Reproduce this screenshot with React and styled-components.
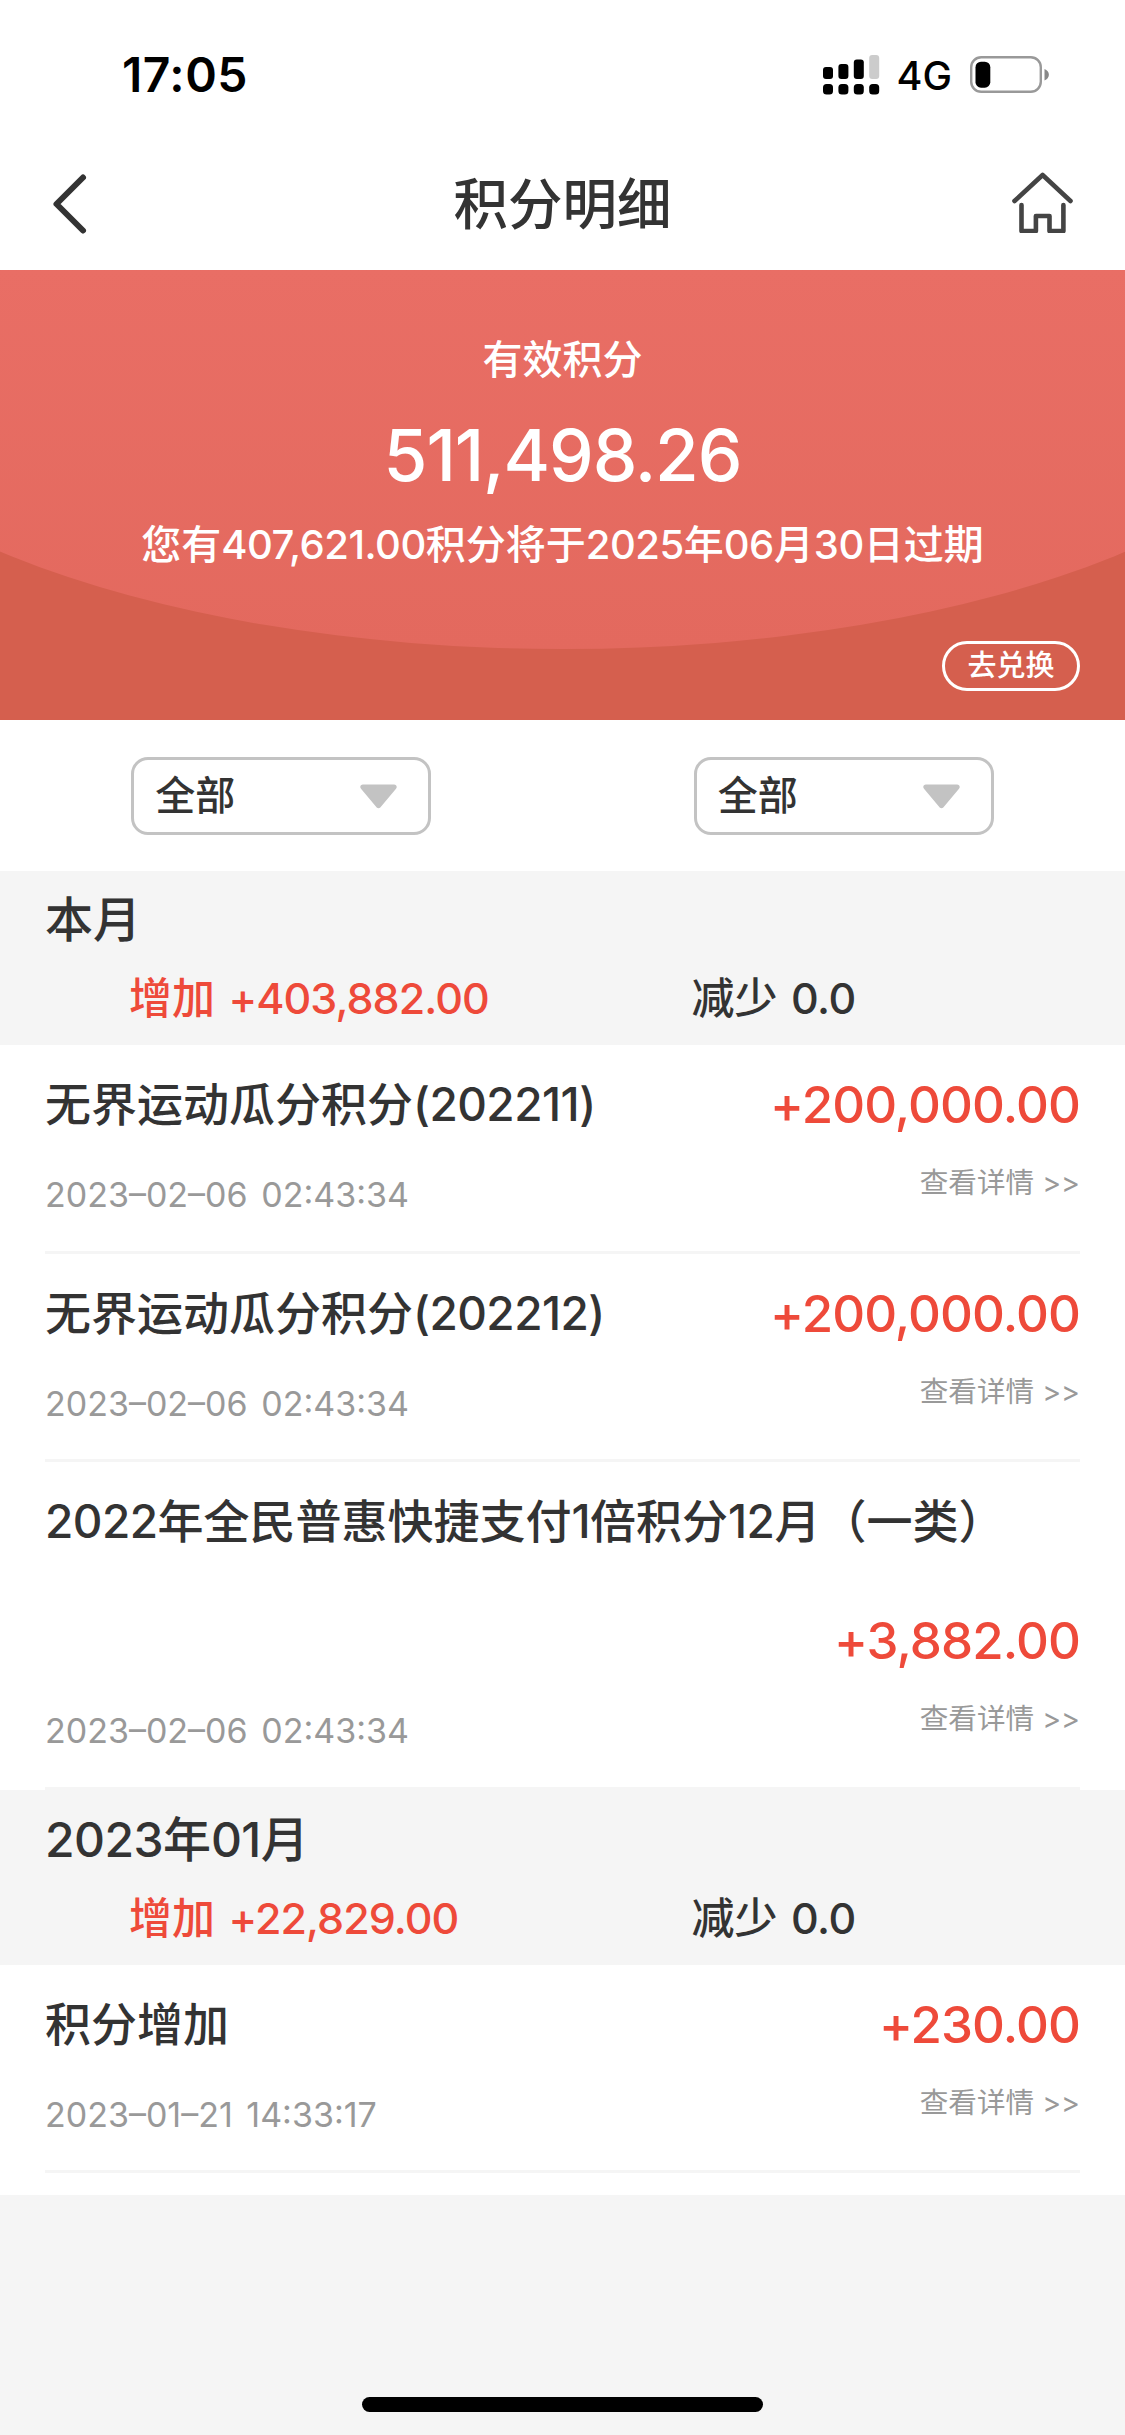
import React from "react";
import styled, { createGlobalStyle } from "styled-components";

const GlobalStyle = createGlobalStyle`
  * {
    box-sizing: border-box;
  }
  body {
    margin: 0;
    background: #f5f5f5;
    color: #333;
    font-family: Inter, "Noto Sans CJK SC", sans-serif;
    font-weight: 500;
  }
`;

const Screen = styled.div`
  width: 1125px;
  height: 2435px;
  display: flex;
  flex-direction: column;
  overflow: hidden;
`;

const StatusBar = styled.div`
  height: 135px;
  padding: 14px 75px 0 122px;
  background: #fff;
  color: #000;
  display: flex;
  align-items: flex-start;
  justify-content: space-between;
  .status__time {
    font-size: 48px;
    font-weight: 600;
    line-height: 121px;
    letter-spacing: 0.5px;
  }
  .status__icons {
    display: flex;
    align-items: center;
    height: 121px;
  }
  .status__network {
    margin: 3px 18px 0 17px;
    font-size: 39.5px;
    line-height: 48px;
  }
`;

const NavBar = styled.div`
  height: 135px;
  padding: 0 52px;
  background: #fff;
  display: grid;
  grid-template-columns: 1fr auto 1fr;
  align-items: center;
  h1 {
    margin: 2px 0 0;
    font-size: 54.5px;
    font-weight: 500;
    line-height: 80px;
  }
  svg:first-child {
    margin-top: 3px;
  }
  svg:last-child {
    justify-self: end;
    margin: 0 0 1px;
  }
`;

const Banner = styled.div`
  position: relative;
  height: 450px;
  padding: 60px 45px 0;
  background: #d55f4e;
  color: #fff;
  display: flex;
  flex-direction: column;
  align-items: center;
  overflow: hidden;
  &::before {
    content: "";
    position: absolute;
    left: -217px;
    bottom: 71px;
    width: 1560px;
    height: 634px;
    border-radius: 50%;
    background: linear-gradient(#e96e65 40%, #e3695e);
  }
  > * {
    position: relative;
  }
  .banner__label {
    font-size: 40px;
    line-height: 60px;
  }
  .banner__balance {
    font-size: 71px;
    line-height: 130px;
    letter-spacing: -1.1px;
  }
  .banner__notice {
    margin-top: 1px;
    font-size: 40px;
    line-height: 48px;
    white-space: nowrap;
  }
`;

const ExchangeButton = styled.button`
  align-self: flex-end;
  margin-top: 72px;
  width: 138px;
  height: 50px;
  padding: 0;
  border: 3px solid #fff;
  border-radius: 25px;
  background: transparent;
  color: #fff;
  font: inherit;
  font-size: 29px;
  line-height: 42px;
`;

const Filters = styled.div`
  height: 150.5px;
  padding-top: 37px;
  background: #fff;
  display: grid;
  grid-template-columns: 1fr 1fr;
  justify-items: center;
  flex-shrink: 0;
`;

const Select = styled.div`
  width: 300px;
  height: 78px;
  padding: 0 31px 0 21px;
  border: 3px solid #c3c3c3;
  border-radius: 17px;
  display: flex;
  align-items: center;
  justify-content: space-between;
  font-size: 40px;
  line-height: 66px;
`;

const MonthHeader = styled.div`
  height: 174.5px;
  padding: 19.5px 45px 0;
  flex-shrink: 0;
  h2 {
    margin: 0;
    font-size: 48px;
    font-weight: 500;
    line-height: 60px;
  }
`;

const Totals = styled.div`
  margin: 18px -45px 0;
  display: grid;
  grid-template-columns: 1fr 1fr;
`;

const Total = styled.div`
  padding-left: 129px;
  color: ${({ $increase }) => ($increase ? "#ee4a3a" : "#333")};
  font-size: 43px;
  line-height: 60px;
  word-spacing: 2px;
`;

const List = styled.div`
  padding: 0 45px ${({ $last }) => ($last ? "21.5px" : "0")};
  background: #fff;
`;

const Row = styled.div`
  display: grid;
  grid-template-columns: 1fr auto;
  grid-template-areas: ${({ $long }) =>
    $long
      ? '"title title" ". amount" "date detail"'
      : '"title amount" "date detail"'};
  border-bottom: 3px solid #f5f5f5;
  .row__title {
    grid-area: title;
    height: 118.3px;
    font-size: 46px;
    line-height: 118px;
    white-space: nowrap;
  }
  .row__amount {
    grid-area: amount;
    height: 118.3px;
    text-align: right;
    color: #ee4a3a;
    font-size: 51px;
    line-height: 119px;
    letter-spacing: -0.9px;
  }
  .row__date {
    grid-area: date;
    height: ${({ $long }) => ($long ? "88.3px" : "87.4px")};
    color: #999;
    font-size: 34px;
    font-weight: 400;
    line-height: 63px;
    word-spacing: 4px;
  }
  .row__detail {
    grid-area: detail;
    text-align: right;
    color: #999;
    font-size: 28.6px;
    font-weight: 400;
    line-height: 40px;
  }
`;

const HomeIndicator = styled.div`
  width: 401px;
  height: 15px;
  margin: auto auto 23px;
  border-radius: 8px;
  background: #000;
`;

const Num = styled.span`
  letter-spacing: ${({ $spacing }) => $spacing}em;
`;

const months = [
  {
    id: 1,
    label: "本月",
    increase: "+403,882.00",
    decrease: "0.0",
    items: [
      {
        id: 11,
        title: "无界运动瓜分积分(202211)",
        amount: "+200,000.00",
        date: "2023–02–06 02:43:34",
      },
      {
        id: 12,
        title: "无界运动瓜分积分(202212)",
        amount: "+200,000.00",
        date: "2023–02–06 02:43:34",
      },
      {
        id: 13,
        title: "2022年全民普惠快捷支付1倍积分12月（一类）",
        amount: "+3,882.00",
        date: "2023–02–06 02:43:34",
        long: true,
      },
    ],
  },
  {
    id: 2,
    label: "2023年01月",
    increase: "+22,829.00",
    decrease: "0.0",
    items: [
      {
        id: 21,
        title: "积分增加",
        amount: "+230.00",
        date: "2023–01–21 14:33:17",
      },
    ],
  },
];

const bars = [
  { x: 0, y: 12 },
  { x: 15.4, y: 9 },
  { x: 30.8, y: 4.5 },
  { x: 46.2, y: 0, off: true },
];

// digits are set a little tighter than the characters around them
const withNumbers = (text, spacing = -0.012) =>
  text.split(/([\d+,.()]+)/).map((part, i) =>
    i % 2 ? (
      <Num key={i} $spacing={spacing}>
        {part}
      </Num>
    ) : (
      part
    )
  );

const SignalIcon = () => (
  <svg width="57" height="40" viewBox="0 0 57 40">
    {bars.map(({ x, y, off }) => (
      <g key={x}>
        <rect
          x={x}
          y={y}
          width="10"
          height={24 - y}
          rx="3"
          fill={off ? "#ccc" : "#000"}
        />
        <rect x={x} y="29" width="10" height="10.5" rx="3.5" />
      </g>
    ))}
  </svg>
);

const BatteryIcon = () => (
  <svg width="80" height="38" viewBox="0 0 80 38">
    <rect
      x="1.2"
      y="1.2"
      width="69.6"
      height="34.6"
      rx="10"
      fill="none"
      stroke="#999"
      strokeWidth="2.4"
    />
    <rect x="5.5" y="5.7" width="14.8" height="26" rx="5.5" />
    <path d="M74.5 13v11.4c2.6-.9 4.4-3.1 4.4-5.7s-1.8-4.8-4.4-5.7z" fill="#888" />
  </svg>
);

const BackIcon = () => (
  <svg width="38" height="62" viewBox="0 0 38 62">
    <path
      d="M31 4.5 4.5 31 31 57.5"
      fill="none"
      stroke="#333"
      strokeWidth="6"
      strokeLinecap="round"
      strokeLinejoin="round"
    />
  </svg>
);

const HouseIcon = () => (
  <svg width="62" height="62" viewBox="0 0 62 62">
    <g
      fill="none"
      stroke="#444"
      strokeWidth="4.6"
      strokeLinecap="round"
      strokeLinejoin="round"
    >
      <path d="M3.500 30 31.600 4 59.500 30" />
      <path d="M10.500 34v26h14.400V45h13.600v15h13.900V34" />
    </g>
  </svg>
);

const ArrowIcon = () => (
  <svg width="37" height="25" viewBox="0 0 37 25">
    <path
      d="M3 .5h31c2.6 0 3.6 2.7 1.8 4.6L20.3 23.5c-1 1.1-2.6 1.1-3.6 0L1.2 5.1C-.6 3.2.4.5 3 .5z"
      fill="#c3c3c3"
    />
  </svg>
);

const PointItem = ({ item }) => {
  const { title, amount, date, long } = item || {};
  return (
    <Row $long={long}>
      <div className="row__title">{withNumbers(title)}</div>
      <div className="row__amount">{amount}</div>
      <div className="row__date">{date}</div>
      <div className="row__detail">查看详情 &gt;&gt;</div>
    </Row>
  );
};

const App = () => {
  return (
    <>
      <GlobalStyle />
      <Screen>
        <StatusBar>
          <div className="status__time">17:05</div>
          <div className="status__icons">
            <SignalIcon />
            <span className="status__network">4G</span>
            <BatteryIcon />
          </div>
        </StatusBar>
        <NavBar>
          <BackIcon />
          <h1>积分明细</h1>
          <HouseIcon />
        </NavBar>
        <Banner>
          <div className="banner__label">有效积分</div>
          <div className="banner__balance">511,498.26</div>
          <div className="banner__notice">
            {withNumbers("您有407,621.00积分将于2025年06月30日过期")}
          </div>
          <ExchangeButton>去兑换</ExchangeButton>
        </Banner>
        <Filters>
          <Select>
            全部
            <ArrowIcon />
          </Select>
          <Select>
            全部
            <ArrowIcon />
          </Select>
        </Filters>
        {months.map((month, index) => (
          <React.Fragment key={month.id}>
            <MonthHeader>
              <h2>{withNumbers(month.label)}</h2>
              <Totals>
                <Total $increase>
                  增加 {withNumbers(month.increase, -0.022)}
                </Total>
                <Total>减少 {withNumbers(month.decrease)}</Total>
              </Totals>
            </MonthHeader>
            <List $last={index === months.length - 1}>
              {month.items.map((item) => (
                <PointItem key={item.id} item={item} />
              ))}
            </List>
          </React.Fragment>
        ))}
        <HomeIndicator />
      </Screen>
    </>
  );
};

export default App;
